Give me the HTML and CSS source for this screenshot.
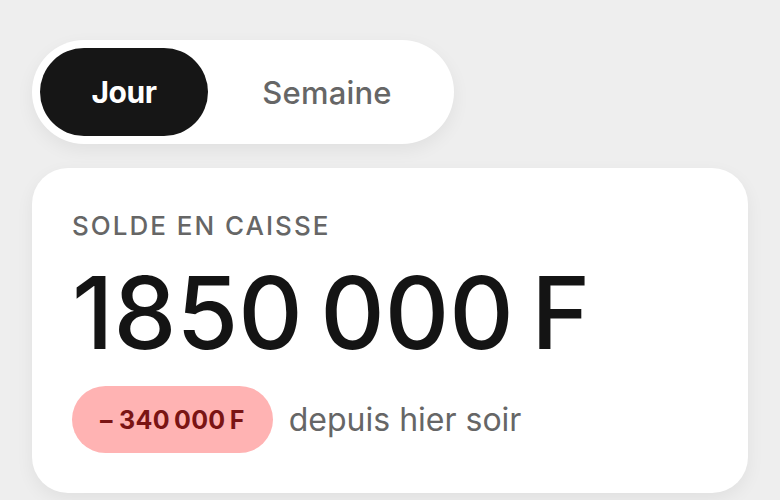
FILE: index.html
```html
<!DOCTYPE html>
<html lang="fr">
<head>
    <meta charset="UTF-8">
    <meta name="viewport" content="width=device-width, initial-scale=1.0">
    <title>Solde en caisse</title>
    <link rel="stylesheet" href="styles.css">
</head>
<body>
    <div class="period-toggle">
        <button class="period active">Jour</button>
        <button class="period">Semaine</button>
    </div>
    <div class="balance-card">
        <div class="label">SOLDE EN CAISSE</div>
        <div class="amount">1850&#8239;000&#8239;F</div>
        <div class="delta-row">
            <span class="delta">– 340&#8239;000&#8239;F</span>
            <span class="since">depuis hier soir</span>
        </div>
    </div>
</body>
</html>
```

FILE: styles.css
```css
body {
    margin: 0;
    padding: 40px 32px 0;
    background: #eeeeee;
    font-family: Inter, "Noto Sans", sans-serif;
    color: #141414;
    height: 460px;
    overflow: hidden;
}
.period-toggle {
    display: inline-flex;
    padding: 8px;
    background: #ffffff;
    border-radius: 52px;
    box-shadow: 0 6px 18px rgba(0, 0, 0, 0.06);
}
.period {
    border: none;
    background: transparent;
    font-family: inherit;
    font-size: 31px;
    font-weight: 500;
    color: #666666;
    height: 88px;
    width: 238px;
    border-radius: 44px;
    padding: 0;
    letter-spacing: 0.2px;
}
.period.active {
    width: 168px;
    background: #161616;
    color: #ffffff;
    font-weight: 700;
    font-size: 30px;
    letter-spacing: -0.5px;
}
.balance-card {
    margin-top: 24px;
    width: 636px;
    padding: 40px;
    background: #ffffff;
    border-radius: 36px;
    box-shadow: 0 6px 18px rgba(0, 0, 0, 0.06);
}
.label {
    font-size: 26px;
    font-weight: 500;
    letter-spacing: 2px;
    color: #666666;
    line-height: 36px;
}
.amount {
    margin-top: 14px;
    font-size: 100px;
    font-weight: 500;
    letter-spacing: 0;
    line-height: 110px;
}
.delta-row {
    margin-top: 18px;
    display: flex;
    align-items: center;
    gap: 16px;
}
.delta {
    background: #ffb3b3;
    color: #7a1414;
    font-size: 25px;
    font-weight: 700;
    letter-spacing: 0.3px;
    height: 67px;
    padding: 0 28px;
    border-radius: 34px;
    display: flex;
    align-items: center;
}
.since {
    font-size: 32px;
    font-weight: 400;
    color: #666666;
    letter-spacing: 0;
}
```
